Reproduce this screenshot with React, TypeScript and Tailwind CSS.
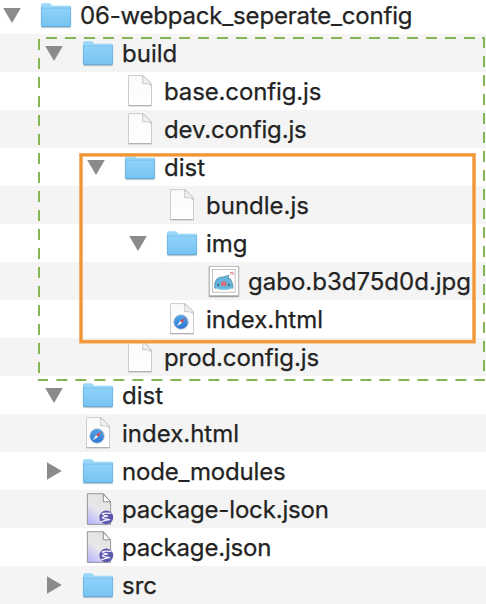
import React from "react";

type Icon = "folder" | "file" | "html" | "json" | "image";
type Row = { name: string; depth: string; icon: Icon; open?: boolean; closed?: boolean; tracking?: string };

const D0 = "pl-[3px]";
const D1 = "pl-[45px]";
const D2 = "pl-[87px]";
const D3 = "pl-[129px]";
const D4 = "pl-[171px]";

const rows: Row[] = [
  { name: "06-webpack_seperate_config", depth: D0, icon: "folder", open: true, tracking: "tracking-[-0.19px]" },
  { name: "build", depth: D1, icon: "folder", open: true },
  { name: "base.config.js", depth: D2, icon: "file", tracking: "tracking-[-0.13px]" },
  { name: "dev.config.js", depth: D2, icon: "file", tracking: "tracking-[-0.16px]" },
  { name: "dist", depth: D2, icon: "folder", open: true },
  { name: "bundle.js", depth: D3, icon: "file" },
  { name: "img", depth: D3, icon: "folder", open: true },
  { name: "gabo.b3d75d0d.jpg", depth: D4, icon: "image" },
  { name: "index.html", depth: D3, icon: "html" },
  { name: "prod.config.js", depth: D2, icon: "file", tracking: "tracking-[-0.1px]" },
  { name: "dist", depth: D1, icon: "folder", open: true },
  { name: "index.html", depth: D1, icon: "html" },
  { name: "node_modules", depth: D1, icon: "folder", closed: true, tracking: "tracking-[-0.2px]" },
  { name: "package-lock.json", depth: D1, icon: "json", tracking: "tracking-[-0.16px]" },
  { name: "package.json", depth: D1, icon: "json", tracking: "tracking-[-0.18px]" },
  { name: "src", depth: D1, icon: "folder", closed: true },
];

function Defs() {
  return (
    <svg width="0" height="0" className="absolute" aria-hidden="true">
      <defs>
        <linearGradient id="front" x1="0" y1="0" x2="0" y2="1">
          <stop offset="0" stopColor="#8ed2fa" />
          <stop offset="1" stopColor="#77c2f1" />
        </linearGradient>
        <linearGradient id="paper" x1="0" y1="0" x2="0" y2="1">
          <stop offset="0" stopColor="#fafafa" />
          <stop offset="1" stopColor="#ffffff" />
        </linearGradient>
        <linearGradient id="lilac" x1="0.8" y1="0" x2="0.2" y2="1">
          <stop offset="0" stopColor="#e2e2e2" />
          <stop offset="0.55" stopColor="#e8e8ea" />
          <stop offset="1" stopColor="#bab6fa" />
        </linearGradient>
        <linearGradient id="compass" x1="0" y1="0" x2="0" y2="1">
          <stop offset="0" stopColor="#55a8ea" />
          <stop offset="1" stopColor="#2b74d2" />
        </linearGradient>
      </defs>
    </svg>
  );
}

function Folder() {
  return (
    <svg width="38" height="38" viewBox="0 0 38 38">
      <path d="M4.5 31.6H33.5" stroke="#000" strokeOpacity="0.18" strokeWidth="1.2" />
      <path d="M4 9Q4 7.2 5.6 7.2H12.2Q13.3 7.2 14 8.2L14.8 9.2Q15.3 9.8 16.3 9.8H32.5Q34 9.8 34 11.2V14H4Z" fill="#98d6fa" />
      <path d="M4 12H34V29.8Q34 31 32.8 31H5.2Q4 31 4 29.8Z" fill="url(#front)" />
      <path d="M4.3 12.1H33.7" stroke="#74b9e4" strokeWidth="0.7" />
      <path d="M4.35 11V30.2M33.65 11V30.2" stroke="#69aedb" strokeWidth="0.7" />
      <path d="M4.6 30.7H33.4" stroke="#5b9fce" strokeWidth="0.8" />
    </svg>
  );
}

function FilePage() {
  return (
    <>
      <path d="M7.5 34.3H30.5" stroke="#000" strokeOpacity="0.12" />
      <path d="M8 3.6H22.2L30.5 12V33.6H7.5V4.1Q7.5 3.6 8 3.6Z" fill="url(#paper)" stroke="#c6c6c6" strokeWidth="0.9" />
      <path d="M7.5 33.5H30.5" stroke="#aaa" strokeWidth="0.8" />
      <path d="M21.3 3.8Q22.4 7 21.5 11.6Q26.5 10.8 30.4 13.5Q29 9 21.3 3.8Z" fill="#f1f1f1" stroke="#bdbdbd" strokeWidth="0.8" />
    </>
  );
}

function FileIcon() {
  return (
    <svg width="38" height="38" viewBox="0 0 38 38">
      <FilePage />
    </svg>
  );
}

function HtmlIcon() {
  return (
    <svg width="38" height="38" viewBox="0 0 38 38">
      <FilePage />
      <circle cx="18" cy="22" r="7.2" fill="url(#compass)" stroke="#a9b9cc" strokeWidth="0.8" />
      <path d="M22.4 17.7L19 22.9L17.1 21Z" fill="#e8403a" />
      <path d="M13.6 26.3L19 22.9L17.1 21Z" fill="#f2f2f2" />
    </svg>
  );
}

function JsonIcon() {
  return (
    <svg width="38" height="38" viewBox="0 0 38 38">
      <path d="M8.4 3.7H24.3L31.6 12V34.4H8.4Z" fill="url(#lilac)" stroke="#8d8d93" strokeWidth="0.9" />
      <path d="M24.3 3.9V11.8H31.4Z" fill="#fafafa" stroke="#777" strokeWidth="0.8" />
      <circle cx="27.3" cy="27.4" r="6.9" fill="#5c58ab" />
      <path
        d="M31.8 23.4Q25.4 22.6 23.2 23.7Q23.2 24.6 28.6 26.2Q23.8 26.7 23.4 27.7Q24.2 28.9 30.6 29.7Q26 30.2 22.6 31.8"
        fill="none"
        stroke="#f4f2ff"
        strokeWidth="1.25"
        strokeLinecap="round"
        strokeLinejoin="round"
      />
    </svg>
  );
}

function ImageIcon() {
  return (
    <svg width="38" height="38" viewBox="0 0 38 38">
      <rect x="3.3" y="4.2" width="31.2" height="31.4" rx="1" fill="#000" fillOpacity="0.15" />
      <rect x="4.4" y="4.4" width="29" height="29.6" fill="#fff" stroke="#b5b5b5" strokeWidth="0.9" />
      <path d="M4.4 34.1H33.5" stroke="#858585" strokeWidth="0.9" />
      <rect x="7.5" y="7.5" width="22.6" height="22.8" fill="#fefefe" stroke="#bcbcbc" strokeWidth="0.9" />
      <path d="M9.8 26.2Q9 20 11.9 17Q13.8 14.6 18 15L23.8 13.2L23.4 15.6Q28 18 28 26.2Q19 28.8 9.8 26.2Z" fill="#65b4da" stroke="#4c7f9c" strokeWidth="0.7" />
      <path d="M10.4 26Q19 28.4 27.6 26" fill="none" stroke="#8fd8ee" strokeWidth="1.2" />
      <path d="M16 24V21.6Q16.2 19.2 18.7 19.2Q21.2 19.2 21.4 21.6V24H19.8L18.7 22.8L17.6 24Z" fill="#de6970" />
      <circle cx="13.3" cy="22.8" r="0.9" fill="#243b49" />
      <circle cx="24.1" cy="22.8" r="0.9" fill="#243b49" />
      <path d="M25 10.5L28 10.2M25.2 12.3L26.5 12M28 10.4V13" stroke="#e2777d" strokeWidth="1" />
    </svg>
  );
}

const icons = { folder: Folder, file: FileIcon, html: HtmlIcon, json: JsonIcon, image: ImageIcon };

function Disclosure({ row }: { row: Row }) {
  return (
    <svg width="18" height="38" viewBox="0 0 18 38" className="shrink-0">
      {row.open && <path d="M0.2 12.1H17.8L9 27Z" fill="#8b8b8b" />}
      {row.closed && <path d="M2 10.2L16.8 19L2 27.8Z" fill="#8b8b8b" />}
    </svg>
  );
}

// Dashed frame round the build folder and solid frame round its output.
function Frames() {
  return (
    <svg width="486" height="604" className="absolute left-0 top-0" fill="none">
      <g stroke="#86b555" strokeWidth="2" strokeDasharray="11 8">
        <path d="M46 38H485" />
        <path d="M484 37V381" />
        <path d="M483 37V39M482 380H485M38 380H48" strokeDasharray="none" />
        <path d="M39 39V381" />
        <path d="M56.4 380H482" />
      </g>
      <rect x="81" y="154.9" width="393" height="186.8" stroke="#f4b06a" strokeWidth="3.8" />
      <rect x="81" y="154.9" width="393" height="186.8" stroke="#f29633" strokeWidth="2.2" />
    </svg>
  );
}

export default function App() {
  return (
    <div className="relative h-[604px] w-[486px] overflow-hidden bg-white font-['Inter',sans-serif] text-[24px] text-[#232323] [-webkit-text-stroke:0.25px_#232323]">
      <Defs />
      <ul className="-mt-1">
        {rows.map((row, i) => {
          const Glyph = icons[row.icon];
          return (
            <li key={i} className={`flex h-[38px] items-center ${row.depth} ${i % 2 ? "bg-[#f4f4f4]" : "bg-white"}`}>
              <Disclosure row={row} />
              <span className="ml-4 shrink-0">
                <Glyph />
              </span>
              <span className={`ml-[5px] whitespace-nowrap pt-0.5 leading-9 ${row.tracking ?? ""}`}>{row.name}</span>
            </li>
          );
        })}
      </ul>
      <Frames />
    </div>
  );
}
